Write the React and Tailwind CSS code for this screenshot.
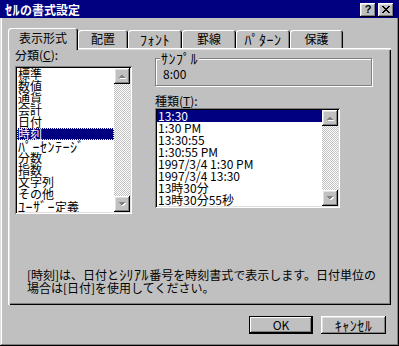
import React from 'react'

const categories = ['標準', '数値', '通貨', '会計', '日付', '時刻', 'ﾊﾟｰｾﾝﾃｰｼﾞ', '分数', '指数', '文字列', 'その他', 'ﾕｰｻﾞｰ定義']
const types = ['13:30', '1:30 PM', '13:30:55', '1:30:55 PM', '1997/3/4 1:30 PM', '1997/3/4 13:30', '13時30分', '13時30分55秒']

const raised = 'shadow-[inset_-1px_-1px_#000,inset_1px_1px_#fff,inset_-2px_-2px_#808080,inset_2px_2px_#dfdfdf]'
const sunken = 'shadow-[inset_1px_1px_#808080,inset_-1px_-1px_#fff,inset_2px_2px_#000,inset_-2px_-2px_#dfdfdf]'

// half-width katakana is drawn much smaller than the old bitmap font, so bump it up
function hw(text) {
  return text.split(/([\uFF61-\uFF9F]+)/).map((part, i) =>
    /[\uFF61-\uFF9F]/.test(part) ? (
      <span key={i} className="text-[14px] leading-[12px] tracking-[0.5px]">
        {part}
      </span>
    ) : (
      part
    )
  )
}

const X_ROWS = ['XX....XX', '.XX..XX.', '..XXXX..', '...XX...', '..XXXX..', '.XX..XX.', 'XX....XX']

function CloseGlyph() {
  return (
    <svg width="8" height="7" viewBox="0 0 8 7" shapeRendering="crispEdges">
      {X_ROWS.flatMap((row, y) =>
        row.split('').map((c, x) => (c === 'X' ? <rect key={`${x}-${y}`} x={x} y={y} width="1" height="1" fill="#000" /> : null))
      )}
    </svg>
  )
}

function Arrow({ down }) {
  const pts = down ? '4,6 11,6 7.5,9.5' : '4,10 11,10 7.5,6.5'
  return (
    <svg width="16" height="16" viewBox="0 0 16 16" shapeRendering="crispEdges">
      <polygon points={pts} fill="#fff" transform="translate(1,1)" />
      <polygon points={pts} fill="#808080" />
    </svg>
  )
}

function ScrollBar() {
  return (
    <div className="flex w-[16px] flex-col">
      <div className={`h-[16px] w-[16px] bg-[#c0c0c0] ${raised}`}>
        <Arrow />
      </div>
      <div className="flex-1 bg-[conic-gradient(#fff_25%,#c0c0c0_0_50%,#fff_0_75%,#c0c0c0_0)] bg-[length:2px_2px]" />
      <div className={`h-[16px] w-[16px] bg-[#c0c0c0] ${raised}`}>
        <Arrow down />
      </div>
    </div>
  )
}

function ListBox({ items, selected, focused, className }) {
  return (
    <div className={`flex bg-white p-[2px] ${sunken} ${className}`}>
      <ul className="flex-1 overflow-hidden">
        {items.map((item, i) => (
          <li
            key={item}
            className={`h-[12px] whitespace-nowrap pl-[1px] text-[12px] leading-[12px] ${
              i === selected ? 'bg-[#000080] text-white' : 'text-black'
            } ${i === selected && focused ? 'outline-1 -outline-offset-1 outline-dotted outline-[#ffff80]' : ''}`}
          >
            {hw(item)}
          </li>
        ))}
      </ul>
      <ScrollBar />
    </div>
  )
}

const tabs = [
  { label: '表示形式', w: 'w-[70px]' },
  { label: '配置', w: 'w-[50px]' },
  { label: 'ﾌｫﾝﾄ', w: 'w-[54px]' },
  { label: '罫線', w: 'w-[54px]' },
  { label: 'ﾊﾟﾀｰﾝ', w: 'w-[54px]' },
  { label: '保護', w: 'w-[53px]' },
]

function Button({ children, isDefault }) {
  return (
    <button
      className={`h-[18px] bg-[#c0c0c0] text-[12px] leading-[12px] text-black ${
        isDefault
          ? 'w-[64px] shadow-[inset_0_0_0_1px_#000,inset_-2px_-2px_#000,inset_2px_2px_#fff,inset_-3px_-3px_#808080]'
          : `w-[65px] ${raised}`
      }`}
    >
      {children}
    </button>
  )
}

export default function App() {
  return (
    <div className="flex h-[346px] w-[399px] flex-col bg-[#c0c0c0] font-['Noto_Sans_CJK_JP',sans-serif] text-black shadow-[inset_-1px_-1px_#000,inset_1px_1px_#dfdfdf,inset_-2px_-2px_#808080,inset_2px_2px_#fff]">
      {/* title bar */}
      <div className="flex h-[18px] items-center bg-[#000080] pl-[5px] pr-[5px]">
        <span className="flex-1 text-[12px] font-bold leading-[12px] text-white">{hw('ｾﾙの書式設定')}</span>
        <div className="flex gap-[2px] pt-[1px]">
          <div className={`flex h-[14px] w-[16px] items-center justify-center bg-[#c0c0c0] ${raised}`}>
            <span className="font-['Liberation_Sans',sans-serif] text-[11px] font-bold leading-[11px]">?</span>
          </div>
          <div className={`flex h-[14px] w-[16px] items-center justify-center bg-[#c0c0c0] pb-[1px] ${raised}`}>
            <CloseGlyph />
          </div>
        </div>
      </div>

      {/* tabs */}
      <div className="mt-[10px] flex h-[20px] items-end pl-[8px]">
        {tabs.map((t, i) => (
          <div
            key={t.label}
            className={`flex items-start justify-center rounded-t-[3px] bg-[#c0c0c0] text-[12px] leading-[12px] ${t.w} ${
              i === 0
                ? 'relative z-10 -mb-[2px] h-[22px] pt-[4px] shadow-[inset_1px_1px_#fff,inset_-1px_0_#000,inset_-2px_0_#808080]'
                : 'h-[18px] pt-[3px] shadow-[inset_1px_1px_#fff,inset_-1px_0_#000,inset_-2px_0_#808080]'
            }`}
          >
            {hw(t.label)}
          </div>
        ))}
      </div>

      {/* panel */}
      <div className="ml-[8px] flex h-[257px] w-[383px] flex-col px-[7px] pt-[1px] shadow-[inset_1px_1px_#fff,inset_2px_2px_#dfdfdf,inset_-1px_-1px_#000,inset_-2px_-2px_#808080]">
        <div className="flex gap-[23px]">
          <div className="flex flex-col">
            <div className="h-[12px] text-[12px] leading-[12px]">
              分類(<span className="underline">C</span>):
            </div>
            <ListBox items={categories} selected={5} focused className="mt-[5px] h-[148px] w-[117px]" />
          </div>

          <div className="mt-[3px] flex flex-col">
            <fieldset className="w-[217px] border border-[#808080] shadow-[1px_1px_0_#fff,inset_1px_1px_0_#fff]">
              <legend className="ml-[4px] bg-[#c0c0c0] px-[1px] text-[12px] leading-[12px]">{hw('ｻﾝﾌﾟﾙ')}</legend>
              <div className="h-[15px] pl-[7px] pt-[3px] text-[12px] leading-[12px]">8:00</div>
              <div className="h-[5px]" />
            </fieldset>
            <div className="mt-[9px] h-[12px] text-[12px] leading-[12px]">
              種類(<span className="underline">T</span>):
            </div>
            <ListBox items={types} selected={0} className="mt-[1px] h-[100px] w-[185px]" />
          </div>
        </div>

        <p className="mt-[54px] pl-[12px] text-[12px] leading-[13px]">
          {hw('[時刻]は、日付とｼﾘｱﾙ番号を時刻書式で表示します。日付単位の')}
          <br />
          場合は[日付]を使用してください。
        </p>
      </div>

      {/* buttons */}
      <div className="mt-[11px] flex justify-end gap-[8px] pr-[13px]">
        <Button isDefault>OK</Button>
        <Button>{hw('ｷｬﾝｾﾙ')}</Button>
      </div>
    </div>
  )
}
